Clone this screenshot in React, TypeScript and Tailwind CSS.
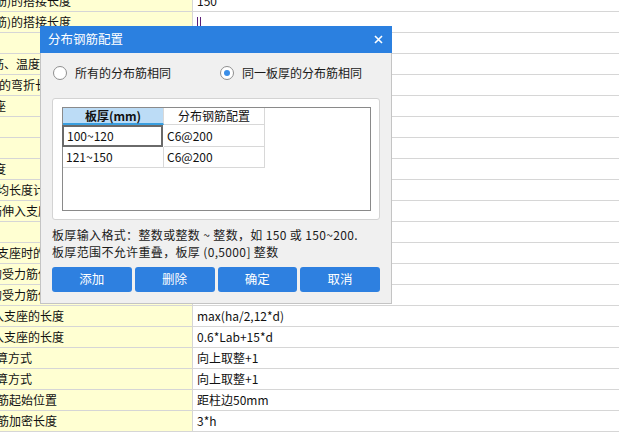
import React, { useState } from 'react';

type Row = { label: string; off: string; value?: string; caret?: boolean };

// background property grid, scrolled horizontally so labels are cut on the left
const rows: Row[] = [
  { label: '筋)的搭接长度', off: 'ml-[-5px]', value: '150' },
  { label: '筋)的搭接长度', off: 'ml-[-5px]', caret: true },
  { label: '', off: 'ml-0' },
  { label: '筋、温度筋的', off: 'ml-[-8px]' },
  { label: '的弯折长度', off: 'ml-[-1px]' },
  { label: '座', off: 'ml-[-6px]' },
  { label: '', off: 'ml-0' },
  { label: '', off: 'ml-0' },
  { label: '度', off: 'ml-[-6px]' },
  { label: '均长度计算', off: 'ml-[-3px]' },
  { label: '筋伸入支座', off: 'ml-[-10px]', value: 'c+15*d', },
  { label: '', off: 'ml-0' },
  { label: '支座时的', off: 'ml-[-3px]' },
  { label: '的受力筋伸入', off: 'ml-[-10px]' },
  { label: '的受力筋伸入', off: 'ml-[-10px]' },
  { label: '入支座的长度', off: 'ml-[-8px]', value: 'max(ha/2,12*d)' },
  { label: '入支座的长度', off: 'ml-[-8px]', value: '0.6*Lab+15*d' },
  { label: '算方式', off: 'ml-[-4px]', value: '向上取整+1' },
  { label: '算方式', off: 'ml-[-4px]', value: '向上取整+1' },
  { label: '筋起始位置', off: 'ml-[-3px]', value: '距柱边50mm' },
  { label: '筋加密长度', off: 'ml-[-3px]', value: '3*h' },
  { label: '', off: 'ml-0' },
];

const specs = [
  { thick: '100~120', cfg: 'C6@200' },
  { thick: '121~150', cfg: 'C6@200' },
];

function Radio({ checked, label, onClick }: { checked: boolean; label: string; onClick: () => void }) {
  return (
    <button onClick={onClick} className="flex items-center gap-[8px] h-[20px]">
      <span className="w-[14px] h-[14px] rounded-full border border-[#8f8f8f] bg-white flex items-center justify-center">
        {checked && <span className="w-[6px] h-[6px] rounded-full bg-[#3a8ee8]" />}
      </span>
      <span className="text-[#1a1a1a]">{label}</span>
    </button>
  );
}

export default function App() {
  const [mode, setMode] = useState<'all' | 'thick'>('thick');

  return (
    <div className="relative w-[619px] h-[432px] overflow-hidden bg-white text-[12px] font-['Noto_Sans_CJK_SC',sans-serif]">
      {/* property grid behind the dialog */}
      <div className="-mt-[9px]">
        {rows.map((r, i) => (
          <div key={i} className="flex h-[21px] border-b border-[#d6d6d6] leading-[20px]">
            <div className="w-[193px] shrink-0 bg-[#ffffd2] border-r border-[#d6d6d6] overflow-hidden whitespace-nowrap text-[#111]">
              <span className={'block ' + r.off}>{r.label}</span>
            </div>
            <div className="flex-1 pl-[4px] text-[#111] flex items-center">
              {r.caret ? (
                <span className="w-[4px] h-[11px] border-x border-[#5a1f78]" />
              ) : (
                r.value
              )}
            </div>
          </div>
        ))}
      </div>

      {/* dialog */}
      <div className="absolute left-[40px] top-[26px] w-[352px] flex flex-col">
        <div className="h-[27px] bg-[#2b80e0] flex items-center justify-between pl-[8px] pr-[9px] text-white text-[12.5px]">
          <span>分布钢筋配置</span>
          <svg width="9" height="9" viewBox="0 0 9 9">
            <path d="M1 1 L8 8 M8 1 L1 8" stroke="white" strokeWidth="1.6" />
          </svg>
        </div>
        <div className="bg-[#f0f0f0] border-x border-b border-[#c4c4c4] px-[11px] pt-[10px] pb-[11px]">
          <div className="flex items-center">
            <div className="ml-[1px] w-[167px]">
              <Radio checked={mode === 'all'} label="所有的分布筋相同" onClick={() => setMode('all')} />
            </div>
            <Radio checked={mode === 'thick'} label="同一板厚的分布筋相同" onClick={() => setMode('thick')} />
          </div>

          <div className="mt-[15px] h-[122px] bg-white border border-[#d3d3d3] rounded-[3px] pl-[9px] pr-[8px] pt-[8px] pb-[8px]">
            <div className="h-full border border-[#8a8a8a] bg-white">
              <div className="flex">
                <div className="w-[101px] h-[17px] bg-[#bcdcf6] border-b-2 border-[#3a9fe0] border-r border-r-[#d8d8d8] font-bold text-center leading-[15px] text-[#111]">
                  板厚(mm)
                </div>
                <div className="w-[101px] h-[17px] border-b border-r border-[#d8d8d8] text-center leading-[16px] text-[#111]">
                  分布钢筋配置
                </div>
              </div>
              {specs.map((s, i) => (
                <div key={i} className="flex">
                  <div
                    className={
                      i === 0
                        ? 'w-[101px] h-[22px] border-2 border-[#6a6a6a] pl-[3px] leading-[18px] -ml-[1px] mr-[1px] text-[#111]'
                        : 'w-[101px] h-[21px] border-b border-r border-[#d8d8d8] pl-[3px] leading-[20px] text-[#111]'
                    }
                  >
                    {s.thick}
                  </div>
                  <div
                    className={
                      'w-[101px] border-b border-r border-[#d8d8d8] pl-[3px] text-[#111] ' +
                      (i === 0 ? 'h-[22px] leading-[21px]' : 'h-[21px] leading-[20px]')
                    }
                  >
                    {s.cfg}
                  </div>
                </div>
              ))}
            </div>
          </div>

          <div className="mt-[6px] leading-[17px] text-[#1a1a1a] tracking-[0.35px] whitespace-nowrap">
            <p>板厚输入格式：整数或整数 ~ 整数，如 150 或 150~200.</p>
            <p>板厚范围不允许重叠，板厚 (0,5000] 整数</p>
          </div>

          <div className="mt-[7px] grid grid-cols-4 gap-[3px]">
            {['添加', '删除', '确定', '取消'].map((t) => (
              <button key={t} className="h-[25px] rounded-[3px] bg-[#2e80e0] text-white text-[12.5px]">
                {t}
              </button>
            ))}
          </div>
        </div>
      </div>
    </div>
  );
}
